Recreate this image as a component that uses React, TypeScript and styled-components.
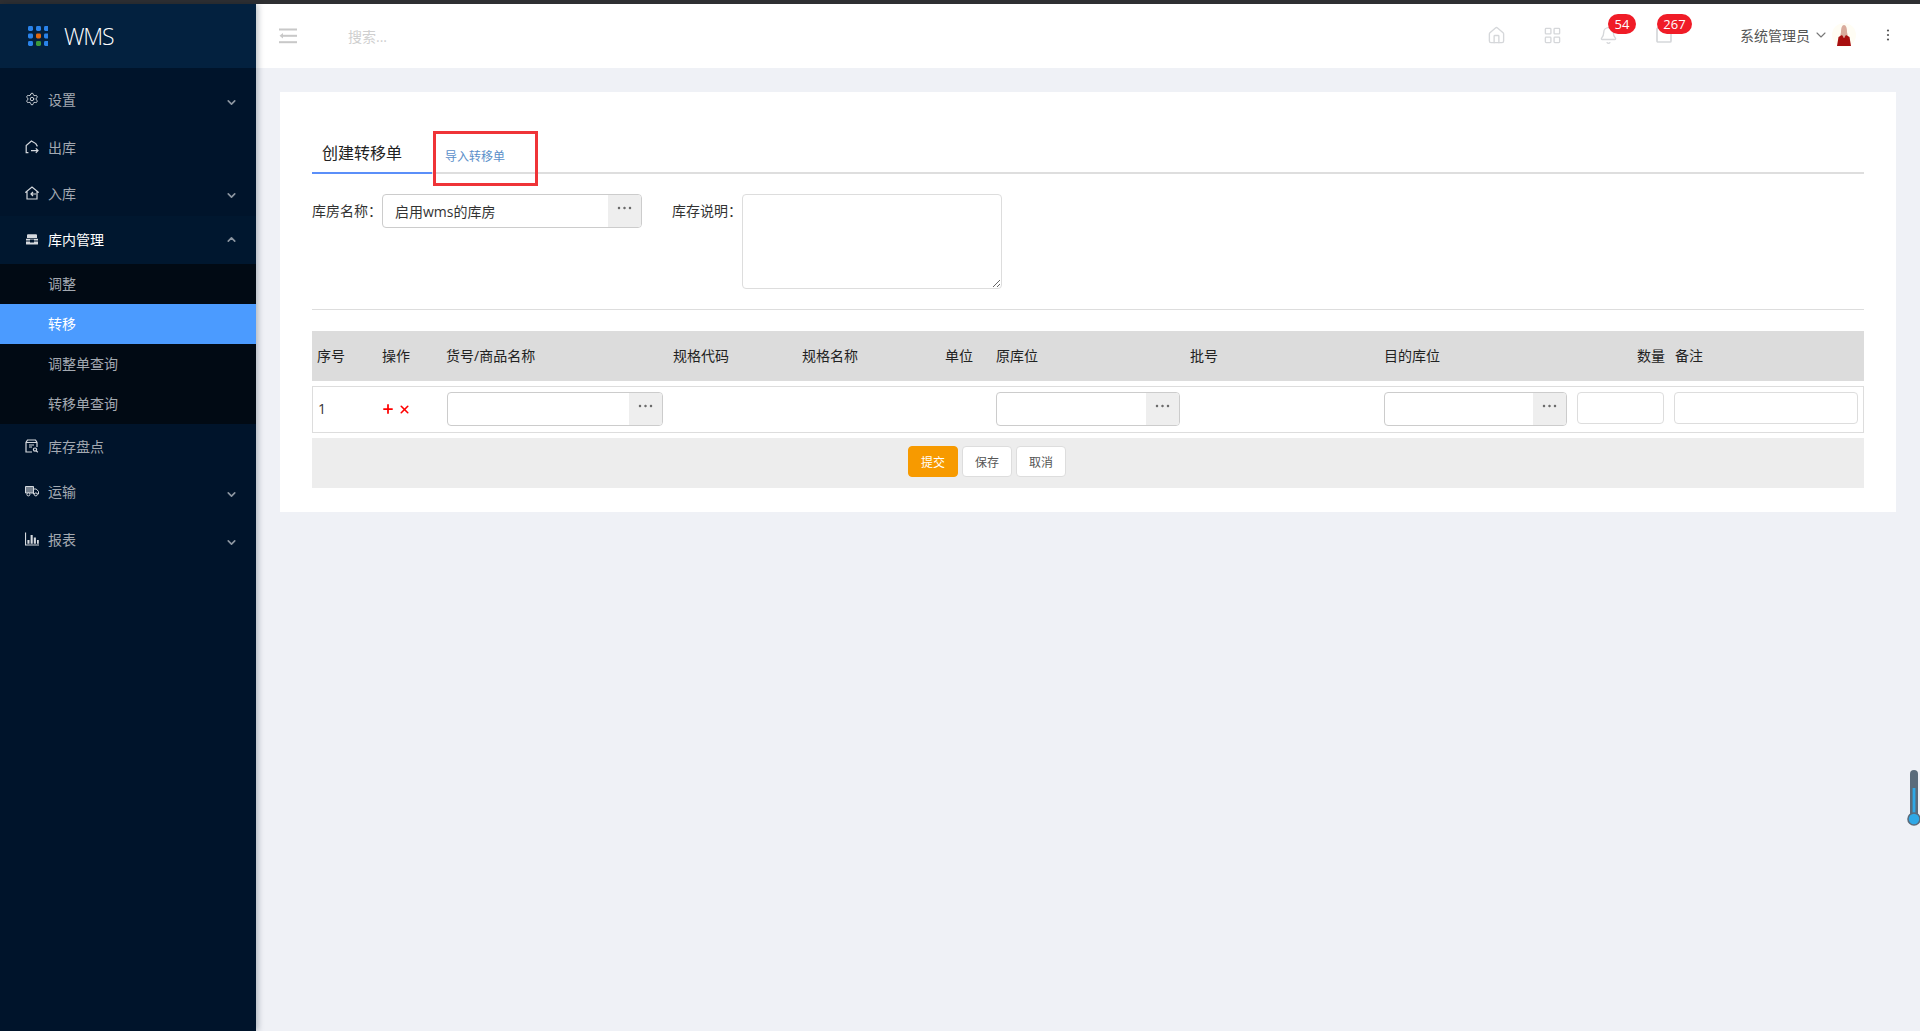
import React from "react";
import styled, { createGlobalStyle } from "styled-components";
import { Settings, ChevronDown, ChevronUp, Bell, Home, LayoutGrid, Plus, X } from "lucide-react";

const Global = createGlobalStyle`
  html, body { margin: 0; height: 100%; overflow: hidden; }
  body { font-family: "Open Sans", "Noto Sans CJK SC", "Liberation Sans", sans-serif; background: #eff1f6; }
  #root { height: 100%; }
  * { box-sizing: border-box; }
`;

const Page = styled.div`display: flex; flex-direction: column; height: 100vh;`;
const TopStrip = styled.div`height: 4px; background: #2e2f32; flex: none;`;
const Body = styled.div`display: flex; flex: 1; min-height: 0;`;

const Sidebar = styled.aside`
  width: 256px; flex: none; background: #00142b; display: flex; flex-direction: column;
  box-shadow: 2px 0 6px rgba(0, 21, 41, 0.28); position: relative; z-index: 2;
`;
const Brand = styled.div`
  height: 64px; background: #03213f; display: flex; align-items: center; padding-left: 28px; gap: 16px; flex: none;
`;
const BrandText = styled.span`
  font-family: "Open Sans", sans-serif; font-weight: 300; font-size: 23px; color: #fff; line-height: 1; letter-spacing: -1.2px; padding-top: 1px;
`;
const Menu = styled.nav`padding-top: 8px; display: flex; flex-direction: column;`;
const MenuRow = styled.div<{ $h: number; $on?: boolean }>`
  height: ${(p) => p.$h}px; display: flex; align-items: center; padding: 0 18px 2px 25px;
  color: ${(p) => (p.$on ? "#ffffff" : "#a3a9b1")}; font-size: 14px;
  background: ${(p) => (p.$on ? "#00172f" : "transparent")};
`;
const MenuIcon = styled.span`width: 14px; height: 14px; display: flex; align-items: center; justify-content: center; margin-right: 9px; flex: none; color: #d5d9de;`;
const Caret = styled.span<{ $open?: boolean }>`
  margin-left: auto; display: flex; color: #8c96a1; margin-top: ${(p) => (p.$open ? "0" : "6px")};
`;
const SubMenu = styled.div`background: #010a14; display: flex; flex-direction: column;`;
const SubRow = styled.div<{ $on?: boolean }>`
  height: 40px; display: flex; align-items: center; padding: 0 0 2px 48px; font-size: 14px;
  color: ${(p) => (p.$on ? "#fff" : "#a3a9b1")};
  background: ${(p) => (p.$on ? "#4b9bff" : "transparent")};
`;

const Main = styled.main`flex: 1; min-width: 0; display: flex; flex-direction: column;`;
const Header = styled.header`height: 64px; background: #fff; display: flex; align-items: center; padding-left: 23px; flex: none;`;
const Search = styled.span`margin-left: 51px; font-size: 14px; color: #cfcfcf;`;
const HeaderRight = styled.div`margin-left: auto; display: flex; align-items: center; height: 100%; padding-right: 30px;`;
const Slot = styled.div`position: relative; width: 56px; height: 100%; display: flex; align-items: center; justify-content: center; color: #d5d7da; padding-bottom: 2px;`;
const Badge = styled.span<{ $left: number; $w: number }>`
  position: absolute; top: 10px; left: ${(p) => p.$left}px; width: ${(p) => p.$w}px; height: 20px; border-radius: 10px;
  background: #f01c27; color: #fff; font-size: 13px; line-height: 20px; text-align: center;
`;
const User = styled.div`display: flex; align-items: center; margin-left: 48px; padding-bottom: 2px; color: #555; font-size: 14px;`;
const UserCaret = styled.span`display: flex; margin: 0 3px; color: #777;`;
const More = styled.span`display: flex; margin-left: 30px; width: 4px;`;

const Content = styled.div`flex: 1; padding: 24px 24px 0;`;
const Card = styled.section`background: #fff; padding: 36px 32px 24px;`;
const Tabs = styled.div`position: relative; display: flex; height: 46px; border-bottom: 2px solid #dedede;`;
const Tab = styled.div<{ $on?: boolean }>`
  height: 46px; width: ${(p) => (p.$on ? "120px" : "auto")};
  padding: ${(p) => (p.$on ? "6px 0 0 10px" : "11px 0 0 13px")};
  border-bottom: ${(p) => (p.$on ? "2px solid #5b8ff9" : "0")};
  font-size: ${(p) => (p.$on ? "16px" : "12px")}; color: ${(p) => (p.$on ? "#222" : "#5b8fc9")};
  line-height: 38px; display: flex; align-items: center;
`;
const Callout = styled.div`
  position: absolute; left: 121px; top: 3px; width: 105px; height: 55px; border: 3px solid #ef3438; pointer-events: none;
`;
const FormRow = styled.div`display: flex; margin-top: 20px;`;
const Field = styled.div`display: flex; & + & { margin-left: 30px; }`;
const Label = styled.label`width: 70px; font-size: 14px; color: #333; line-height: 34px; white-space: nowrap;`;
const Pick = styled.div<{ $w: number }>`
  width: ${(p) => p.$w}px; height: 34px; border: 1px solid #ccc; border-radius: 4px; display: flex; overflow: hidden; background: #fff;
`;
const PickValue = styled.div`flex: 1; padding-left: 12px; font-size: 14px; color: #333; line-height: 34px;`;
const PickBtn = styled.div`width: 33px; background: #eee; display: flex; justify-content: center; padding-top: 11px; flex: none;`;
const Area = styled.textarea`
  width: 260px; height: 95px; display: block; border: 1px solid #ddd; border-radius: 4px; outline: none; background: #fff; resize: both;
`;
const Divider = styled.hr`margin: 20px 0 21px; border: 0; height: 1px; background: #ddd;`;

const columns = "70px 65px 225px 130px 143px 51px 194px 194px 192px 99px 189px";
const TableHead = styled.div`
  display: grid; grid-template-columns: ${columns}; height: 50px; padding-bottom: 2px; background: #dcdcdc; align-items: center; font-size: 14px; color: #222;
`;
const Th = styled.div<{ $pad?: number; $right?: boolean; $shift?: number }>`
  padding-left: ${(p) => p.$pad ?? 0}px; margin-left: ${(p) => p.$shift ?? 0}px;
  ${(p) => (p.$right ? "text-align: right; padding-right: 10px;" : "")} white-space: nowrap;
`;
const TableRow = styled.div`
  display: grid; grid-template-columns: ${columns}; height: 47px; margin-top: 5px; align-items: start; padding-top: 6px;
  box-shadow: inset 0 0 0 1px #ddd; font-size: 14px; color: #333;
`;
const Cell = styled.div<{ $pad?: number }>`padding-left: ${(p) => p.$pad ?? 0}px; line-height: 34px; display: flex; align-items: center; height: 34px;`;
const Actions = styled.div`display: flex; align-items: center; height: 34px; gap: 3px; margin-left: -1px; color: #f00;`;
const PlainInput = styled.input<{ $w: number; $shift?: number }>`
  display: block; width: ${(p) => p.$w}px; height: 32px; margin-left: ${(p) => p.$shift ?? 0}px;
  border: 1px solid #ddd; border-radius: 4px; outline: none; background: #fff; padding: 0 8px;
`;
const Footer = styled.div`height: 50px; margin-top: 5px; padding: 0 0 3px 596px; background: #ededed; display: flex; align-items: center; gap: 4px;`;
const Btn = styled.button<{ $primary?: boolean }>`
  width: 50px; height: 31px; border-radius: 4px; font: inherit; font-size: 12px; padding: 0;
  background: ${(p) => (p.$primary ? "#f79a00" : "#fff")}; color: ${(p) => (p.$primary ? "#fff" : "#555")};
  border: 1px solid ${(p) => (p.$primary ? "#f79a00" : "#ddd")};
`;
const Thermo = styled.svg`position: absolute; right: -1px; top: 768px; z-index: 3;`;

const Dots = () => (
  <svg width="15" height="4" viewBox="0 0 15 4" fill="#6b6b6b">
    <rect x="0.8" y="0.8" width="2.4" height="2.4" rx="1" /><rect x="6.3" y="0.8" width="2.4" height="2.4" rx="1" /><rect x="11.8" y="0.8" width="2.4" height="2.4" rx="1" />
  </svg>
);

const LogoMark = () => (
  <svg width="20" height="20" viewBox="0 0 20 20">
    {[0, 1, 2].map((r) =>
      [0, 1, 2].map((c) => (
        <rect key={`${r}${c}`} x={c * 8} y={r * 7.5} width="5" height="5" rx="1.4"
          fill={r === 1 && c === 1 ? "#e2680f" : r === 2 && c === 1 ? "#3c9a3a" : "#2a83ea"} />
      ))
    )}
  </svg>
);

const stroke = { fill: "none", stroke: "currentColor", strokeWidth: 1.2 } as const;
const OutIcon = () => (
  <svg width="14" height="14" viewBox="0 0 14 14" {...stroke}>
    <path d="M3.4 12.6H1.2V5.6L6.4 1l4.4 2.6 1.6 2.8" />
    <path d="M6 10.6h7M10.8 8.4l2.2 2.2-2.2 2.2" />
  </svg>
);
const InIcon = () => (
  <svg width="14" height="14" viewBox="0 0 14 14" {...stroke}>
    <path d="M2 13V6.2H.6L7 1l6.4 5.2H12V13H2Z" />
    <path d="M11 8H6M8 6 6 8l2 2" />
  </svg>
);
const BoxIcon = () => (
  <svg width="14" height="14" viewBox="0 0 14 14" fill="currentColor">
    <path d="M3 2.2h8a1 1 0 0 1 1 1V6H2V3.2a1 1 0 0 1 1-1Z" />
    <path d="M1 6.8h12v1.7H9V7.6H5v.9H1V6.8ZM1 9.4h4v1h4v-1h4V12a.6.6 0 0 1-.6.6H1.6A.6.6 0 0 1 1 12V9.4Z" />
  </svg>
);
const CheckIcon = () => (
  <svg width="14" height="14" viewBox="0 0 14 14" {...stroke}>
    <path d="M7 13H1V3.5L2.5 1h8L12 3.5V8M1 3.5h11M4 6h5M4 8h3" />
    <circle cx="10" cy="10.6" r="1.6" /><path d="m11.2 11.8 1.6 1.4" />
  </svg>
);
const TruckIcon = () => (
  <svg width="14" height="14" viewBox="0 0 14 14" fill="none" stroke="currentColor" strokeWidth="1">
    <path d="M.5 2.5h8v6.5h-8z" fill="currentColor" fillOpacity=".55" />
    <path d="M8.5 5h2.7l2.3 2.4V10H8.5z" />
    <circle cx="3.4" cy="10.4" r="1.5" fill="#00142b" /><circle cx="10.8" cy="10.4" r="1.5" fill="#00142b" />
  </svg>
);
const ChartIcon = () => (
  <svg width="14" height="14" viewBox="0 0 14 14" fill="currentColor">
    <path d="M0 .5h1.1v12H14v1.1H0zM2.4 8h2.1v3.8H2.4zM5.6 3h2.1v8.8H5.6zM8.8 5.6h2.1v6.2H8.8zM12 8h1.8v3.8H12z" />
  </svg>
);
const FoldIcon = () => (
  <svg width="18" height="16" viewBox="0 0 18 16" fill="#c8c8c8">
    <rect y="0.5" width="18" height="2" /><rect x="3" y="6.8" width="15" height="2" /><rect y="13.2" width="18" height="2" />
    <path d="M4 5v5.6L0.5 7.8z" />
  </svg>
);
const MsgIcon = () => (
  <svg width="16" height="16" viewBox="0 0 16 16" fill="none" stroke="#d5d7da" strokeWidth="1.7">
    <rect x="1" y="1" width="14" height="14" rx="1" />
  </svg>
);
const Avatar = () => (
  <svg width="24" height="24" viewBox="0 0 24 24">
    <circle cx="12" cy="12" r="12" fill="#fffdf4" />
    <path d="M9 9c0-4 1-7 3-7s3 3 3 7l1 5H8l1-5Z" fill="#d9ab9c" />
    <path d="M5 23l1.5-9L10 12l2 3 2-3 3.5 2L19 23H5Z" fill="#a80f0f" />
  </svg>
);
const MoreIcon = () => (
  <svg width="4" height="12" viewBox="0 0 4 12" fill="#555">
    <circle cx="2" cy="1.5" r="1.1" /><circle cx="2" cy="6" r="1.1" /><circle cx="2" cy="10.5" r="1.1" />
  </svg>
);

const Down = () => <ChevronDown size={13} strokeWidth={3} />;

export default function App() {
  return (
    <Page>
      <Global />
      <TopStrip />
      <Body>
        <Sidebar>
          <Brand><LogoMark /><BrandText>WMS</BrandText></Brand>
          <Menu>
            <MenuRow $h={48}><MenuIcon><Settings size={14} strokeWidth={1.6} /></MenuIcon>设置<Caret><Down /></Caret></MenuRow>
            <MenuRow $h={47}><MenuIcon><OutIcon /></MenuIcon>出库</MenuRow>
            <MenuRow $h={45}><MenuIcon><InIcon /></MenuIcon>入库<Caret><Down /></Caret></MenuRow>
            <MenuRow $h={48} $on><MenuIcon><BoxIcon /></MenuIcon>库内管理<Caret $open><ChevronUp size={13} strokeWidth={3} /></Caret></MenuRow>
            <SubMenu>
              <SubRow>调整</SubRow>
              <SubRow $on>转移</SubRow>
              <SubRow>调整单查询</SubRow>
              <SubRow>转移单查询</SubRow>
            </SubMenu>
            <MenuRow $h={46}><MenuIcon><CheckIcon /></MenuIcon>库存盘点</MenuRow>
            <MenuRow $h={44}><MenuIcon><TruckIcon /></MenuIcon>运输<Caret><Down /></Caret></MenuRow>
            <MenuRow $h={52}><MenuIcon><ChartIcon /></MenuIcon>报表<Caret><Down /></Caret></MenuRow>
          </Menu>
        </Sidebar>
        <Main>
          <Header>
            <FoldIcon />
            <Search>搜索...</Search>
            <HeaderRight>
              <Slot><Home size={19} strokeWidth={1.7} /></Slot>
              <Slot><LayoutGrid size={19} strokeWidth={1.7} /></Slot>
              <Slot><Bell size={19} strokeWidth={1.7} /><Badge $left={28} $w={28}>54</Badge></Slot>
              <Slot><MsgIcon /><Badge $left={21} $w={35}>267</Badge></Slot>
              <User>
                系统管理员
                <UserCaret><ChevronDown size={16} strokeWidth={1.6} /></UserCaret>
                <Avatar />
                <More><MoreIcon /></More>
              </User>
            </HeaderRight>
          </Header>
          <Content>
            <Card>
              <Tabs>
                <Tab $on>创建转移单</Tab>
                <Tab>导入转移单</Tab>
                <Callout />
              </Tabs>
              <FormRow>
                <Field>
                  <Label>库房名称：</Label>
                  <Pick $w={260}><PickValue>启用wms的库房</PickValue><PickBtn><Dots /></PickBtn></Pick>
                </Field>
                <Field>
                  <Label>库存说明：</Label>
                  <Area />
                </Field>
              </FormRow>
              <Divider />
              <TableHead>
                <Th $pad={5}>序号</Th>
                <Th>操作</Th>
                <Th $shift={-1}>货号/商品名称</Th>
                <Th $pad={1}>规格代码</Th>
                <Th>规格名称</Th>
                <Th>单位</Th>
                <Th>原库位</Th>
                <Th>批号</Th>
                <Th>目的库位</Th>
                <Th $right>数量</Th>
                <Th>备注</Th>
              </TableHead>
              <TableRow>
                <Cell $pad={6}>1</Cell>
                <Actions><Plus size={14} strokeWidth={3} /><X size={13} strokeWidth={3} /></Actions>
                <Pick $w={216}><PickValue /><PickBtn><Dots /></PickBtn></Pick>
                <div /><div /><div />
                <Pick $w={184}><PickValue /><PickBtn><Dots /></PickBtn></Pick>
                <div />
                <Pick $w={183}><PickValue /><PickBtn><Dots /></PickBtn></Pick>
                <PlainInput $w={87} $shift={1} />
                <PlainInput $w={184} $shift={-1} />
              </TableRow>
              <Footer>
                <Btn $primary>提交</Btn>
                <Btn>保存</Btn>
                <Btn>取消</Btn>
              </Footer>
            </Card>
          </Content>
        </Main>
      </Body>
      <Thermo width="14" height="60" viewBox="0 0 14 60">
        <rect x="3" y="2" width="8" height="50" rx="4" fill="#5a6b7b" />
        <rect x="5.6" y="20" width="2.8" height="34" fill="#2fa8e6" />
        <circle cx="7" cy="51" r="6" fill="#2fa8e6" stroke="#5a6b7b" strokeWidth="1.6" />
      </Thermo>
    </Page>
  );
}
